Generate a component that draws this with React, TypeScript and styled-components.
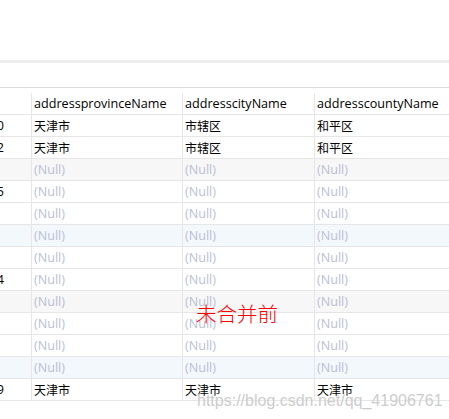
import React from "react";
import styled, { createGlobalStyle } from "styled-components";

const GlobalStyle = createGlobalStyle`
  html, body { margin: 0; padding: 0; background: #ffffff; }
  body { font-family: "Open Sans", "Noto Sans CJK SC", sans-serif; }
`;

const Page = styled.div`
  position: relative;
  width: 449px;
  height: 419px;
  overflow: hidden;
  background: #ffffff;
`;

const TopArea = styled.div`
  height: 60px;
`;

const SplitBar = styled.div`
  height: 3px;
  background: #eeeeee;
`;

const Spacer = styled.div`
  height: 24px;
`;

const Grid = styled.div`
  border-top: 1px solid #dddddd;
  font-size: 12.6px;
`;

const Row = styled.div<{ $bg?: string; $header?: boolean }>`
  display: grid;
  grid-template-columns: 31px 151px 132px 1fr;
  height: ${(p) => (p.$header ? "26px" : "21px")};
  border-bottom: 1px solid #e6e6e6;
  background: ${(p) => p.$bg || "#ffffff"};
  align-items: ${(p) => (p.$header ? "end" : "stretch")};
`;

const Cell = styled.div<{ $null?: boolean; $first?: boolean }>`
  box-sizing: border-box;
  height: 21px;
  border-left: ${(p) => (p.$first ? "none" : "1px solid #e6e6e6")};
  padding-left: ${(p) => (p.$first ? "0" : "2px")};
  display: flex;
  align-items: center;
  justify-content: ${(p) => (p.$first ? "flex-end" : "flex-start")};
  padding-right: ${(p) => (p.$first ? "27px" : "0")};
  overflow: hidden;
  white-space: nowrap;
  color: ${(p) => (p.$null ? "#b9bfd6" : "#000000")};
  font-family: "Open Sans", "Noto Sans CJK SC", sans-serif;
`;

const Cjk = styled.span`
  font-size: 12px;
  font-family: "Noto Sans CJK SC", sans-serif;
`;

const Note = styled.div`
  position: absolute;
  left: 196px;
  top: 301px;
  font-size: 20.5px;
  line-height: 24px;
  color: #ff0000;
  font-family: "Noto Sans CJK SC", sans-serif;
  font-weight: 300;
`;

const Watermark = styled.div`
  position: absolute;
  left: 197px;
  top: 392px;
  font-size: 16px;
  line-height: 18px;
  color: rgba(190, 190, 190, 0.8);
  font-family: "Liberation Sans", Arial, sans-serif;
  text-shadow: 0 0 1px rgba(255, 255, 255, 0.9);
  white-space: nowrap;
`;

type RowData = {
  id: string;
  p: string | null;
  c: string | null;
  d: string | null;
  bg?: string;
};

const GRAY = "#f7f7f7";
const BLUE = "#f3f8fd";

const rows: RowData[] = [
  { id: "1000", p: "天津市", c: "市辖区", d: "和平区" },
  { id: "1002", p: "天津市", c: "市辖区", d: "和平区" },
  { id: "", p: null, c: null, d: null, bg: GRAY },
  { id: "1005", p: null, c: null, d: null },
  { id: "", p: null, c: null, d: null },
  { id: "", p: null, c: null, d: null, bg: BLUE },
  { id: "", p: null, c: null, d: null },
  { id: "1004", p: null, c: null, d: null },
  { id: "", p: null, c: null, d: null, bg: GRAY },
  { id: "", p: null, c: null, d: null },
  { id: "", p: null, c: null, d: null },
  { id: "", p: null, c: null, d: null, bg: BLUE },
  { id: "1009", p: "天津市", c: "天津市", d: "天津市" },
];

const Val = ({ v }: { v: string | null }) => (
  <Cell $null={v === null}>{v === null ? "(Null)" : <Cjk>{v}</Cjk>}</Cell>
);

export default function App() {
  return (
    <>
      <GlobalStyle />
      <Page>
        <TopArea />
        <SplitBar />
        <Spacer />
        <Grid>
          <Row $header>
            <Cell $first />
            <Cell>addressprovinceName</Cell>
            <Cell>addresscityName</Cell>
            <Cell>addresscountyName</Cell>
          </Row>
          {rows.map((r, i) => (
            <Row key={i} $bg={r.bg}>
              <Cell $first>{r.id}</Cell>
              <Val v={r.p} />
              <Val v={r.c} />
              <Val v={r.d} />
            </Row>
          ))}
        </Grid>
        <Note>未合并前</Note>
        <Watermark>https://blog.csdn.net/qq_41906761</Watermark>
      </Page>
    </>
  );
}
